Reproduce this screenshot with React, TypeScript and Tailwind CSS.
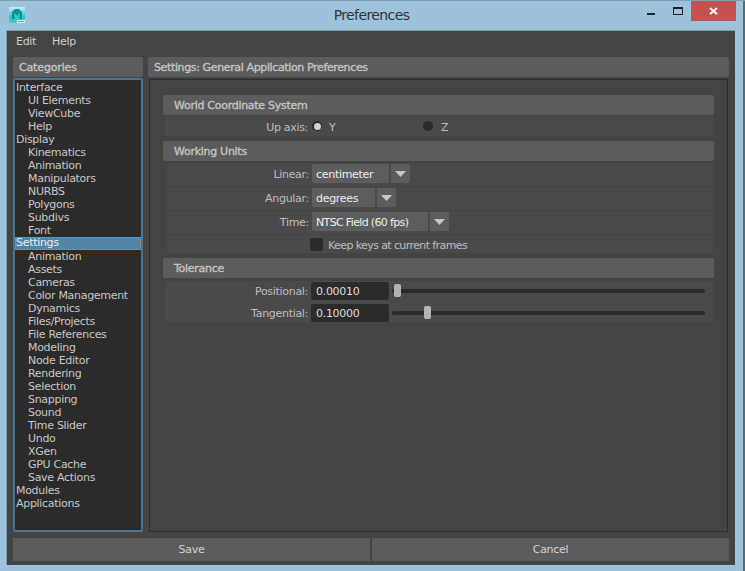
const font = { fontFamily: '"DejaVu Sans", sans-serif' };

const tree: [string, boolean][] = [
  ["Interface", false], ["UI Elements", true], ["ViewCube", true], ["Help", true],
  ["Display", false], ["Kinematics", true], ["Animation", true], ["Manipulators", true], ["NURBS", true], ["Polygons", true], ["Subdivs", true], ["Font", true],
  ["Settings", false], ["Animation", true], ["Assets", true], ["Cameras", true], ["Color Management", true], ["Dynamics", true], ["Files/Projects", true], ["File References", true], ["Modeling", true], ["Node Editor", true], ["Rendering", true], ["Selection", true], ["Snapping", true], ["Sound", true], ["Time Slider", true], ["Undo", true], ["XGen", true], ["GPU Cache", true], ["Save Actions", true],
  ["Modules", false], ["Applications", false],
];

const bold = "[-webkit-text-stroke:0.35px_#c4c4c4] text-[#c4c4c4]";

function Header({ children }: { children: string }) {
  return (
    <div className={`flex h-5 items-center rounded-[2px] bg-[#5c5c5c] pl-[11px] tracking-[-0.28px] ${bold}`}>{children}</div>
  );
}

function Label({ children }: { children: string }) {
  return <div className="w-[145px] pr-[3px] pt-[2px] text-right text-[#bdbdbd]">{children}</div>;
}

function Select({ value, w, tight }: { value: string; w: string; tight?: boolean }) {
  return (
    <div className="flex h-[19px] gap-[2px]">
      <div className={`flex items-center rounded-l-[2px] bg-[#5d5d5d] pl-[4px] pt-[2px] text-[#eeeeee] ${tight ? "tracking-[-0.65px]" : ""} ${w}`}>{value}</div>
      <div className="flex w-[19px] items-center justify-center rounded-r-[2px] bg-[#5d5d5d]">
        <svg width="11" height="6" viewBox="0 0 11 6"><path d="M0 0h11L5.5 6z" fill="#c8c8c8" /></svg>
      </div>
    </div>
  );
}

function Radio({ on }: { on: boolean }) {
  return (
    <div className="flex h-[10px] w-[10px] items-center justify-center rounded-full bg-[#2b2b2b]">
      {on && <div className="h-[7px] w-[7px] rounded-full bg-[#d4d4d4]" />}
    </div>
  );
}

function SliderRow({ label, value, thumb }: { label: string; value: string; thumb: string }) {
  return (
    <div className="flex h-[18px] items-center">
      <div className="w-[146px] pr-[3px] text-right text-[#bdbdbd]">{label}</div>
      <div className="flex h-[18px] w-[78px] items-center rounded-[2px] bg-[#2b2b2b] pl-[5px] pt-px text-[#dddddd]">{value}</div>
      <div className="relative ml-[3px] h-[4px] w-[313px] rounded-[2px] bg-[#2b2b2b]">
        <div className={`absolute top-[-5px] h-[13px] w-[7px] rounded-[2px] bg-[#b4b4b4] ${thumb}`} />
      </div>
    </div>
  );
}

function rowClass(name: string, child: boolean) {
  if (name === "Settings") return "border border-dotted border-[#d08a3e] bg-[#5285a6] leading-[10px] text-[#eeeeee]";
  return child ? "pl-[13px] leading-[13px] text-[#c8c8c8]" : "pl-px leading-[13px] text-[#c8c8c8]";
}

export default function App() {
  return (
    <div className="relative flex h-[571px] w-[745px] flex-col overflow-hidden border-t border-t-[#7d9db3] bg-[#9dc3dc] text-[11px] leading-[13px] tracking-[-0.3px]" style={font}>
      <div className="absolute right-0 top-0 h-full w-[2px] bg-[#5a6a76]" />
      <div className="flex h-[29px] shrink-0 items-start pl-[9px]">
        <svg className="mt-[6px]" width="16" height="16" viewBox="0 0 16 16">
          <defs>
            <linearGradient id="mayaBg" x1="0" y1="0" x2="0" y2="1">
              <stop offset="0" stopColor="#c8f0ee" />
              <stop offset="0.6" stopColor="#2cc7c4" />
              <stop offset="1" stopColor="#36cfc9" />
            </linearGradient>
          </defs>
          <rect width="16" height="16" fill="url(#mayaBg)" />
          <path d="M3 12V5l3-3h4l3 3v7h-2.5V6L8 9 5.500 6v6z" fill="#0c8f9a" />
          <rect x="8" y="13" width="8" height="3" fill="#dfe9e9" />
          <rect x="9" y="14" width="6" height="1" fill="#7f9b9c" />
        </svg>
        <div className="ml-[-25px] mt-[6px] flex-1 pl-[96px] text-center text-[14px] leading-[17px] tracking-[-0.6px] text-[#333333]">Preferences</div>
        <div className="flex h-[20px] items-start">
          <div className="mt-[12px] h-[2px] w-[8px] bg-[#222222]" />
          <div className="ml-[18px] mt-[6px] h-[8px] w-[10px] border border-t-2 border-[#222222]" />
          <div className="ml-[8px] mr-[9px] flex h-[20px] w-[45px] items-center justify-center bg-[#c75050]">
            <svg width="9" height="8" viewBox="0 0 9 8"><path d="M1 1l7 6M8 1L1 7" stroke="#ffffff" strokeWidth="2" /></svg>
          </div>
        </div>
      </div>

      <div className="ml-[6px] flex h-[535px] w-[729px] flex-col border-l border-t border-[#7d9db3] bg-[#444444]">
        <div className="flex h-[26px] shrink-0 items-start gap-[16px] pl-[9px] pt-[4px] text-[#cfcfcf]">
          <span>Edit</span>
          <span>Help</span>
        </div>

        <div className="flex h-[475px] gap-[5px] pl-[6px] pr-[5px]">
          <div className="flex w-[130px] flex-col">
            <div className={`flex h-5 shrink-0 items-center rounded-[2px] bg-[#5c5c5c] pl-[6px] tracking-[-0.15px] ${bold}`}>Categories</div>
            <div className="mt-px flex-1 rounded-[2px] border-2 border-[#4c7492] bg-[#2b2b2b] pt-px">
              {tree.map(([name, child], i) => (
                <div key={i} className={`h-[13px] whitespace-nowrap ${rowClass(name, child)}`}>
                  {name}
                </div>
              ))}
            </div>
          </div>

          <div className="flex w-[581px] flex-col">
            <div className={`flex h-5 shrink-0 items-center rounded-[2px] bg-[#5c5c5c] pl-[6px] tracking-[-0.37px] ${bold}`}>Settings: General Application Preferences</div>
            <div className="mx-px mt-[2px] flex-1 border border-[#2b2b2b] pl-[13px] pr-[13px] pt-[15px]">
              <Header>World Coordinate System</Header>
              <div className="ml-[2px] mr-px mt-px flex h-5 items-center bg-[#4a4a4a]">
                <div className="w-[147px] pr-[4px] pt-[2px] text-right text-[#bdbdbd]">Up axis:</div>
                <Radio on />
                <span className="ml-[7px] w-[94px] pt-[2px] text-[#bdbdbd]">Y</span>
                <Radio on={false} />
                <span className="ml-[8px] pt-[2px] text-[#bdbdbd]">Z</span>
              </div>

              <div className="mt-[5px]"><Header>Working Units</Header></div>
              <div className="ml-[4px] mr-px mt-[2px]">
                <div className="flex h-[24px] items-start border-b border-[#444444] bg-[#4a4a4a] pt-px">
                  <div className="flex h-[19px] items-center"><Label>Linear:</Label></div>
                  <Select value="centimeter" w="w-[77px]" />
                </div>
                <div className="flex h-[24px] items-start border-b border-[#444444] bg-[#4a4a4a] pt-px">
                  <div className="flex h-[19px] items-center"><Label>Angular:</Label></div>
                  <Select value="degrees" w="w-[63px]" />
                </div>
                <div className="flex h-[24px] items-start border-b border-[#444444] bg-[#4a4a4a] pt-px">
                  <div className="flex h-[19px] items-center"><Label>Time:</Label></div>
                  <Select value="NTSC Field (60 fps)" w="w-[116px]" tight />
                </div>
                <div className="flex h-[18px] items-center bg-[#4a4a4a]">
                  <div className="ml-[143px] h-[13px] w-[13px] rounded-[2px] bg-[#2b2b2b]" />
                  <span className="ml-[5px] pt-[2px] tracking-[-0.6px] text-[#bdbdbd]">Keep keys at current frames</span>
                </div>
              </div>

              <div className="mt-[5px]"><Header>Tolerance</Header></div>
              <div className="ml-[2px] mr-px mt-[3px] flex h-[41px] flex-col justify-between bg-[#4a4a4a] pt-px">
                <SliderRow label="Positional:" value="0.00010" thumb="left-[2px]" />
                <SliderRow label="Tangential:" value="0.10000" thumb="left-[32px]" />
              </div>
            </div>
          </div>
        </div>

        <div className="mt-[6px] flex h-[23px] gap-[2px] pl-[6px] text-[#d4d4d4]">
          <div className="flex w-[357px] items-center justify-center bg-[#5c5c5c]">Save</div>
          <div className="flex w-[357px] items-center justify-center bg-[#5c5c5c]">Cancel</div>
        </div>
      </div>
    </div>
  );
}
